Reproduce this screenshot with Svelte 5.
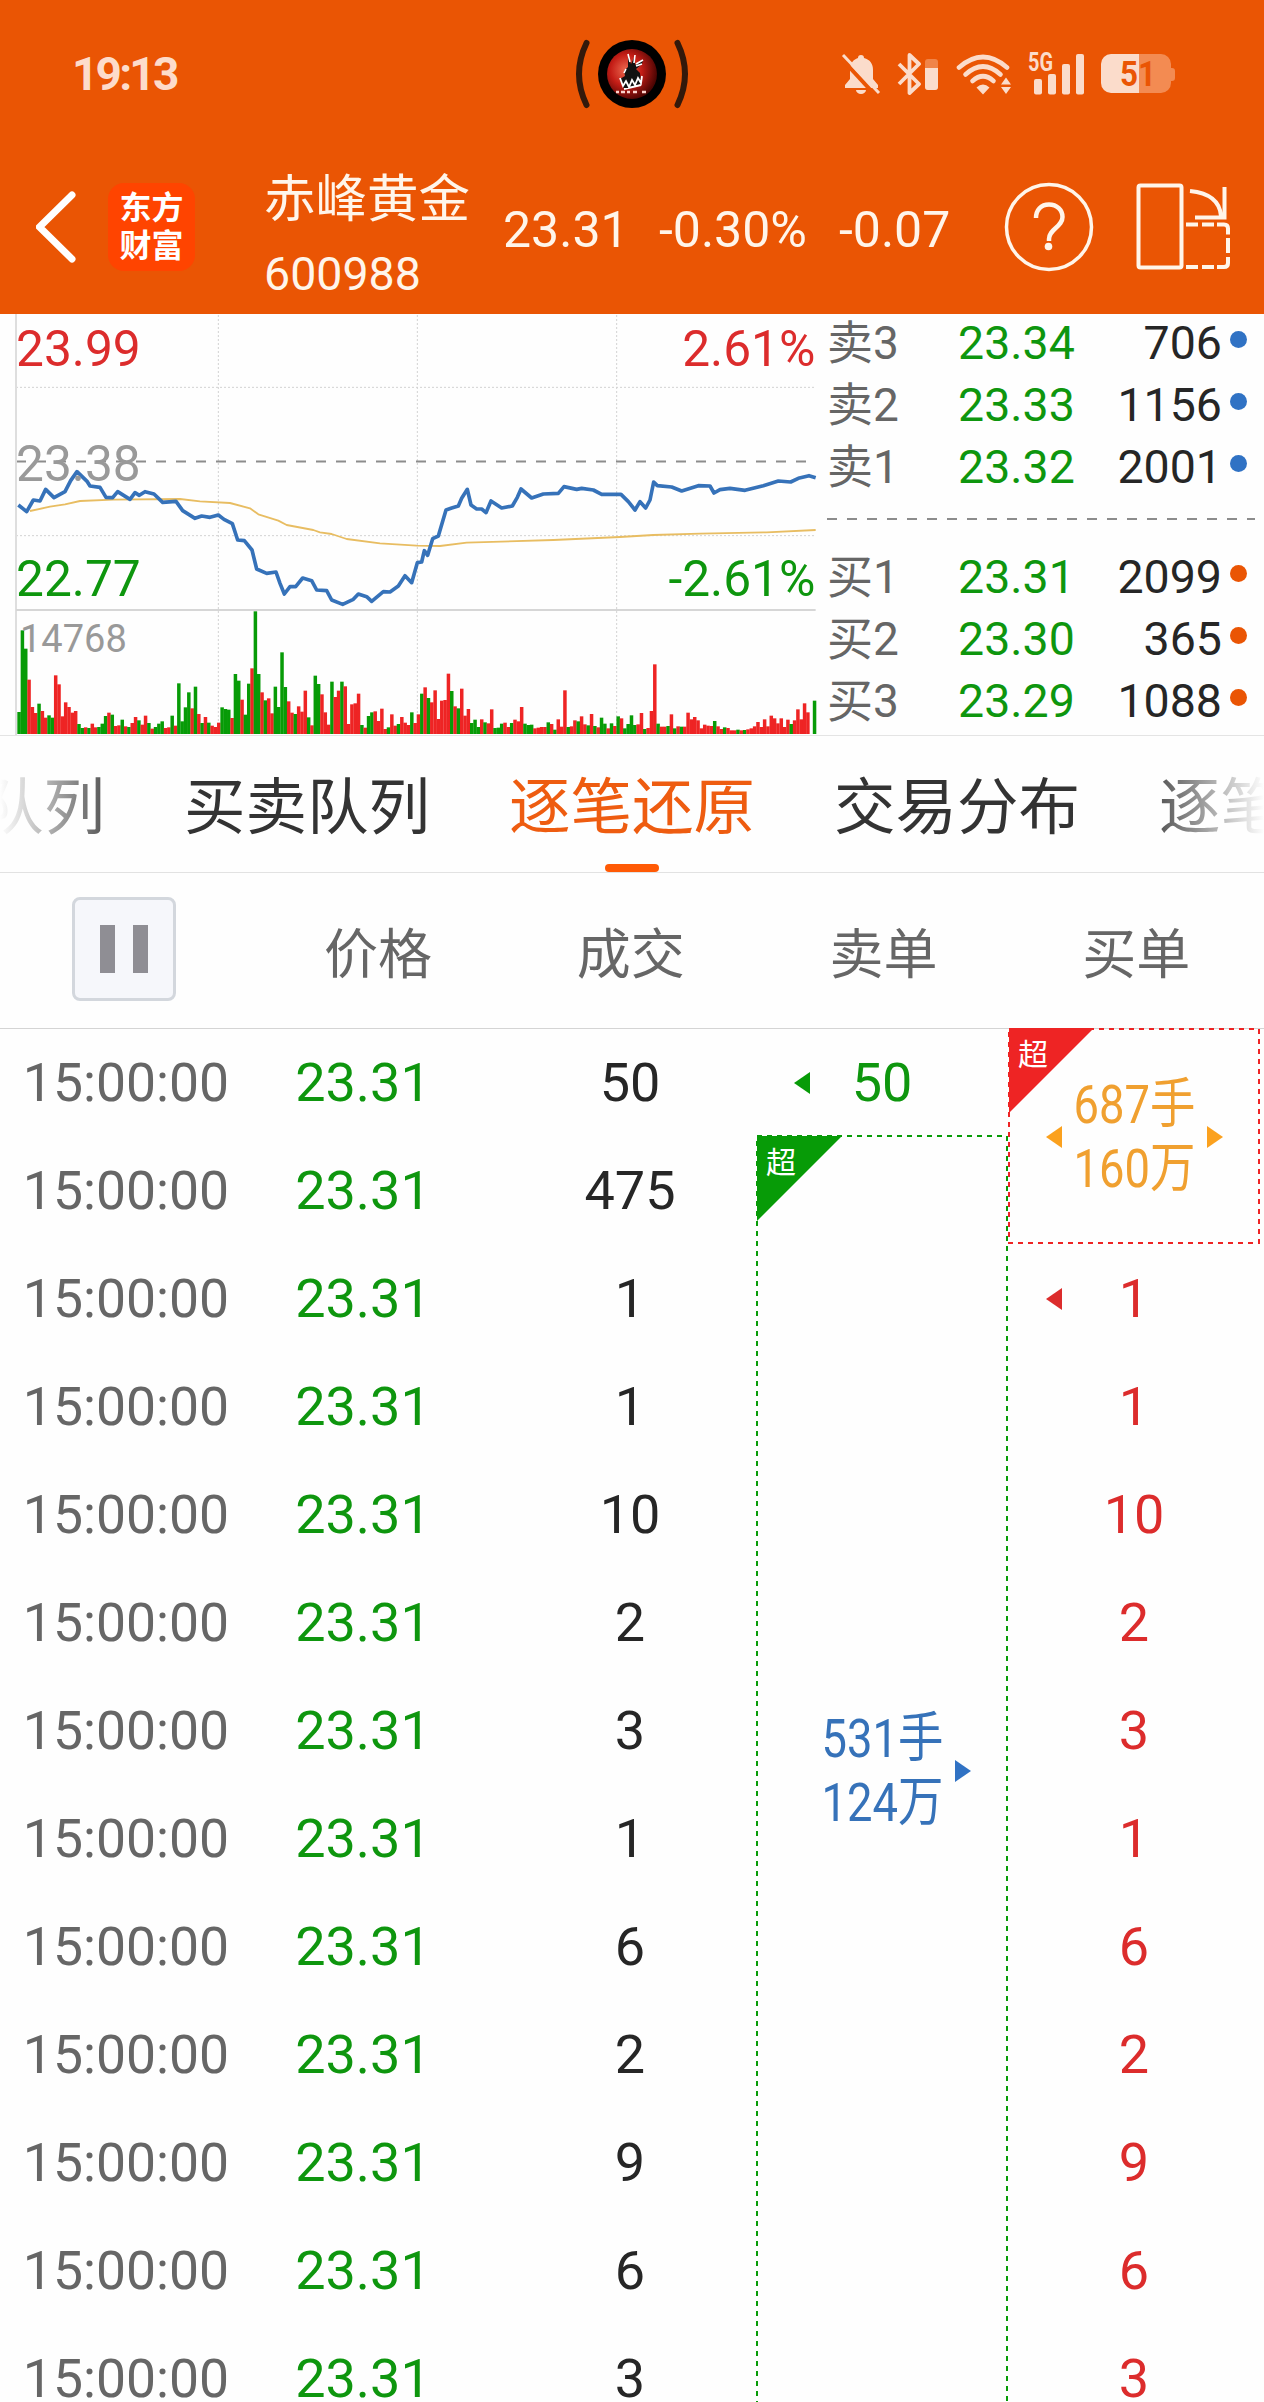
<script lang="ts">
	interface Level {
		label: string;
		price: string;
		volume: number;
	}

	interface Deal {
		time: string;
		price: string;
		volume: number;
	}

	const stock = { name: '赤峰黄金', code: '600988', price: '23.31', percent: '-0.30%', change: '-0.07' };

	const asks: Level[] = [
		{ label: '卖3', price: '23.34', volume: 706 },
		{ label: '卖2', price: '23.33', volume: 1156 },
		{ label: '卖1', price: '23.32', volume: 2001 }
	];

	const bids: Level[] = [
		{ label: '买1', price: '23.31', volume: 2099 },
		{ label: '买2', price: '23.30', volume: 365 },
		{ label: '买3', price: '23.29', volume: 1088 }
	];

	const tabs = ['买卖队列', '买卖队列', '逐笔还原', '交易分布', '逐笔委托'];
	let activeTab = $state(2);

	const columns = ['价格', '成交', '卖单', '买单'];

	const deals: Deal[] = [50, 475, 1, 1, 10, 2, 3, 1, 6, 2, 9, 6, 3].map((volume) => ({
		time: '15:00:00',
		price: '23.31',
		volume
	}));

	// the first two deals belong to one merged buy order
	const buys = deals.slice(2);

	// minute volumes: positive = up (red), negative = down (green)
	const volumes = [
		-66, -311, -256, 163, 81, 63, -91, 69, 49, -56, -49, 176, 149, 53, 95, 81, 64, 69, -30, -18,
		20, -18, 31, 20, -21, -31, -54, 64, -58, 24, 26, -43, 23, -21, 33, 51, -41, 28, 55, -33,
		16, -21, -31, -38, 18, 20, -55, 25, -152, -38, -80, -125, 77, -142, 60, -33, 51, -34, 25, 21,
		34, -80, -75, -73, 48, -180, -160, 103, -58, -151, 197, -368, -180, 125, -101, 107, 62, -142, -81, -245,
		-141, 98, 64, -60, 83, 67, 130, -50, 26, -175, -150, 119, 65, 28, -157, 111, 130, -157, 143, 30,
		89, 92, 121, -27, 19, -54, -65, 68, 39, 76, 15, -20, 59, 25, -30, 51, 34, 27, -65, 33,
		59, -121, 140, -108, 95, 131, 45, 100, 102, 181, -129, 83, -77, 136, 55, 75, -33, -43, -21, 44,
		-35, 32, 74, -18, -19, -31, 34, 21, -33, 43, 38, 81, -31, -27, -28, 17, 19, 21, 21, -35,
		30, -13, 44, 22, 131, -21, 23, 41, -38, 53, 29, -26, 60, -24, 20, -49, -31, 17, -32, 24,
		-53, 47, -17, -30, -56, -27, 29, 63, -15, 18, 69, 209, -31, 22, 22, -24, 59, -17, 23, -22,
		22, 64, 44, 51, 41, 17, 28, 25, 24, -39, 23, 15, -20, 18, 11, 11, -13, 11, -12, 14,
		17, 23, 36, 21, 44, 23, 55, 47, 32, 47, 21, 43, -30, 41, 74, 44, 92, 65, 0, -100
	];

	const priceLine =
		'55,585 80,605 100,570 120,573 137,538 162,563 195,545 212,512 231,485 262,515 270,528 300,532 318,562 338,563 353,545 390,568 405,548 418,556 435,545 462,552 488,577 528,574 548,602 585,625 605,618 630,622 655,615 672,628 697,641 713,690 733,692 756,720 770,777 800,790 828,786 840,820 853,852 870,830 887,830 908,804 935,812 950,840 980,842 995,870 1028,883 1060,868 1075,852 1100,860 1115,874 1150,845 1170,846 1195,828 1215,797 1235,818 1252,758 1265,756 1273,722 1283,736 1298,686 1315,678 1338,600 1355,594 1375,588 1385,565 1402,538 1413,585 1430,597 1445,597 1458,608 1473,573 1505,594 1537,588 1552,562 1563,537 1595,564 1630,552 1675,550 1692,530 1730,538 1745,535 1780,540 1805,553 1863,553 1885,575 1905,600 1920,575 1937,594 1950,570 1961,516 1972,527 2015,531 2045,543 2095,527 2130,528 2142,549 2160,539 2190,535 2235,541 2290,527 2335,513 2372,516 2395,505 2427,497 2447,503';

	const averageLine =
		'90,603 150,590 195,583 240,573 340,569 540,567 600,574 690,579 750,595 775,613 835,632 860,645 940,660 960,667 995,672 1040,687 1140,700 1250,707 1320,708 1400,698 1660,690 1860,681 1960,675 2100,671 2300,667 2447,660';
</script>

{#snippet marker(direction: 'left' | 'right')}
	<svg class="marker" viewBox="0 0 16 22">
		<path d={direction === 'left' ? 'M16 0V22L0 11Z' : 'M0 0V22L16 11Z'} />
	</svg>
{/snippet}

{#snippet levels(list: Level[], side: string)}
	{#each list as level}
		<div class="level">
			<span class="level-label">{level.label}</span>
			<span class="level-price">{level.price}</span>
			<span class="level-volume">{level.volume}</span>
			<i class="dot {side}"></i>
		</div>
	{/each}
{/snippet}

<div class="screen">
	<header>
		<div class="status">
			<span class="clock">19:13</span>

			<svg class="island" width="116" height="72" viewBox="0 0 116 72">
				<defs>
					<radialGradient id="disc" cx="38%" cy="42%" r="62%">
						<stop offset="0" stop-color="#ec6a50" />
						<stop offset="0.5" stop-color="#c41d16" />
						<stop offset="1" stop-color="#4d0503" />
					</radialGradient>
				</defs>
				<path d="M12.500 5Q-2.500 36 12.500 67M103.500 5Q118.500 36 103.500 67" fill="none" stroke="#33190b" stroke-width="6" stroke-linecap="round" />
				<circle cx="58" cy="36" r="34" fill="#000" />
				<circle cx="58" cy="36" r="25" fill="url(#disc)" />
				<path d="M54 17l3 9 4-8v9l8-5-1 4-6 5 4 4 1 11-17 5-4-10 5-3-1-5 4-4z" fill="#111" />
				<path d="M54 16l2 8M61 17l-1 8M69 22l-7 4M68 26l-6 2M52 31l-2 4" fill="none" stroke="#fff" stroke-width="1.600" />
				<path d="M46 40l3 8 3-5 3 6 3-7 3 5 3-7 3 5 1-7M50 51l17-4" fill="none" stroke="#fff" stroke-width="1.800" />
				<path d="M42 54h3m2 0h4m2 0h3m3 0h4m5 0h4" stroke="#fcd3cb" stroke-width="2.400" />
			</svg>

			<div class="indicators">
				<svg class="bell" width="40" height="42" viewBox="0 0 40 42">
					<path d="M20 2a3 3 0 0 1 3 3c6 1.500 9 6 9 12v9l5 6v3H4v-3l5-6v-9c0-6 3-10.500 8-12a3 3 0 0 1 3-3zM15 37h10a5 4 0 0 1-10 0z" />
					<path d="M0 5L35 43" stroke="#ea5504" stroke-width="4" />
					<path d="M2 2L38 40" stroke="#fbdccb" stroke-width="3" />
				</svg>
				<svg class="bluetooth" width="42" height="42" viewBox="0 0 42 42">
					<path d="M2 11L22 31L12.500 40V2L22 11L2 31" fill="none" stroke="#fbdccb" stroke-width="3.800" stroke-linejoin="round" />
					<rect x="28" y="6" width="13" height="31" rx="3" opacity="0.35" />
					<path d="M28 15h13v19a3 3 0 0 1-3 3h-7a3 3 0 0 1-3-3z" />
				</svg>
				<svg class="wifi" width="56" height="42" viewBox="0 0 56 42">
					<g fill="none" stroke="#fbdccb" stroke-width="4.600" stroke-linecap="round">
						<path d="M3 14.500Q27 -6.500 51 14.500" />
						<path d="M9.500 21.500Q27 5.500 44.500 21.500" />
						<path d="M16.500 28Q27 18.500 37.500 28" />
					</g>
					<path d="M20.500 34.500q6.500-6 13 0l-6.500 7zM50 24.500l5 7h-10zM50 41l5-7h-10z" />
				</svg>
				<svg class="signal" width="58" height="50" viewBox="0 -4 58 50">
					<text x="0" y="18" font-size="25.500" textLength="25" lengthAdjust="spacingAndGlyphs">5G</text>
					<rect x="6" y="26" width="8" height="15.500" rx="2" />
					<rect x="20" y="21" width="8" height="20.500" rx="2" />
					<rect x="34" y="11" width="8" height="30.500" rx="2" />
					<rect x="48" y="1" width="8" height="40.500" rx="2" />
				</svg>
				<svg class="battery" width="74" height="40" viewBox="0 0 74 40">
					<path d="M37 0h23a10 10 0 0 1 10 10v4h1a3 3 0 0 1 3 3v7a3 3 0 0 1-3 3h-1v2a10 10 0 0 1-10 10H37z" fill="#f38b52" />
					<path d="M38 0H10A10 10 0 0 0 0 10v19a10 10 0 0 0 10 10h28z" />
					<text class="charge" x="19" y="32" font-size="35" textLength="36" lengthAdjust="spacingAndGlyphs">51</text>
				</svg>
			</div>
		</div>

		<div class="quote">
			<svg width="42" height="74" viewBox="0 0 42 74">
				<path d="M36 5L3.500 37L36 69" fill="none" stroke="#fff" stroke-width="7" stroke-linecap="round" stroke-linejoin="miter" />
			</svg>
			<div class="brand"><span>东方</span><span>财富</span></div>
			<div class="identity">
				<span class="name">{stock.name}</span>
				<span class="code">{stock.code}</span>
			</div>
			<span class="figure">{stock.price}</span>
			<span class="figure">{stock.percent}</span>
			<span class="figure">{stock.change}</span>
			<svg width="90" height="90" viewBox="0 0 90 90">
				<circle cx="45" cy="45" r="42.500" fill="none" stroke="#fff5ea" stroke-width="3.500" />
				<path d="M32 36c0-8 5-13.500 13-13.500S58.500 28 58.500 35c0 10-13.500 12-13.500 22v2" fill="none" stroke="#fff5ea" stroke-width="4.500" />
				<circle cx="44.500" cy="64.500" r="3.800" fill="#fff5ea" />
			</svg>
			<svg width="96" height="88" viewBox="0 0 96 88">
				<g fill="none" stroke="#fff5ea" stroke-width="4">
					<rect x="2.500" y="2.500" width="43" height="82" rx="2" />
					<path d="M54 8C74 10 84 19 85 33M88.500 4V34.500H59" />
					<path d="M50 41.500h12M66 41.500h12M81 41.500h7q4 0 4 4v6M92 55v15M92 74v6q0 4-4 4h-7M78 84H66M62 84H50" />
				</g>
			</svg>
		</div>
	</header>

	<section class="market">
		<!-- drawn at three units per pixel -->
		<svg class="chart" width="817" height="421" viewBox="0 12 2451 1263">
			<g class="grid">
				<path d="M655 15V1272M1252 15V1272M1850 15V1272" />
				<path d="M48 232H2447M48 677H2447" />
			</g>
			<path d="M48 454.500H2427" stroke="#8c8c8c" stroke-width="6" stroke-dasharray="30 30" />
			<path d="M48 12V1275" stroke="#dedede" stroke-width="6" />
			<path d="M48 900H2447" stroke="#d6d6d6" stroke-width="6" />

			{#each volumes as volume, i}
				<rect
					x={52 + i * 9.985}
					y={1272 - Math.abs(volume)}
					width="10.500"
					height={Math.abs(volume)}
					fill={volume > 0 ? '#ee2424' : '#079b07'}
				/>
			{/each}

			<polyline points={averageLine} stroke="#e8bd62" stroke-width="5.500" />
			<polyline points={priceLine} stroke="#3672b9" stroke-width="11" />

			<text class="up" x="48" y="167">23.99</text>
			<text class="flat" x="48" y="512">23.38</text>
			<text class="down" x="48" y="857">22.77</text>
			<text class="up" x="2446" y="167" text-anchor="end">2.61%</text>
			<text class="down" x="2446" y="857" text-anchor="end">-2.61%</text>
			<text class="flat peak" x="60" y="1025">14768</text>
		</svg>

		<div class="book">
			{@render levels(asks, 'ask')}
			<svg class="divider" width="430" height="48">
				<path d="M0 19H428" stroke="#8c8c8c" stroke-width="2" stroke-dasharray="10 10" />
			</svg>
			{@render levels(bids, 'bid')}
		</div>
	</section>

	<nav>
		{#each tabs as tab, i}
			<button class:active={i === activeTab} onclick={() => (activeTab = i)}>{tab}</button>
		{/each}
	</nav>

	<div class="head">
		<div class="pause-cell">
			<button class="pause" aria-label="暂停"><i></i><i></i></button>
		</div>
		{#each columns as column}
			<span>{column}</span>
		{/each}
	</div>

	<main>
		<div class="deals">
			{#each deals as deal}
				<div class="deal">
					<span class="time">{deal.time}</span>
					<span class="price">{deal.price}</span>
					<span class="volume">{deal.volume}</span>
				</div>
			{/each}
		</div>

		<div class="orders sell">
			<div class="order">
				{@render marker('left')}
				<span>50</span>
			</div>
			<div class="block sell-block">
				<svg class="outline"><rect x="1" y="1" width="250" height="1300" /></svg>
				<span class="badge">超</span>
				<i></i>
				<p><span>531手</span><span>124万</span></p>
				{@render marker('right')}
			</div>
		</div>

		<div class="orders buy">
			<div class="block buy-block">
				<svg class="outline"><rect x="1" y="1" width="250" height="214" /></svg>
				<span class="badge">超</span>
				{@render marker('left')}
				<p><span>687手</span><span>160万</span></p>
				{@render marker('right')}
			</div>
			{#each buys as buy, i}
				<div class="order">
					{#if i === 0}
						{@render marker('left')}
					{:else}
						<i></i>
					{/if}
					<span>{buy.volume}</span>
				</div>
			{/each}
		</div>
	</main>
</div>

<style>
	:global(body) {
		background: #fefefe;
	}

	.screen {
		width: 1264px;
		height: 2402px;
		overflow: hidden;
		background: #fefefe;
		color: #262626;
		font-family: Roboto, 'Noto Sans CJK SC', sans-serif;
	}

	svg {
		display: block;
	}

	button {
		font: inherit;
		border: 0;
		padding: 0;
		background: none;
	}

	header {
		height: 314px;
		background: #ea5504;
		color: #fff5ea;
	}

	/* status bar */
	.status {
		display: grid;
		grid-template-columns: 502px 116px 1fr;
		align-items: center;
		height: 148px;
		padding-left: 72px;
	}

	.clock {
		font-size: 46px;
		font-weight: 700;
		letter-spacing: -2.8px;
		color: #fddccb;
	}

	.indicators {
		display: flex;
		align-items: center;
		padding-left: 151px;
		fill: #fbdccb;
	}

	.indicators text {
		font-weight: 700;
	}

	.bluetooth {
		margin-left: 16px;
	}

	.wifi {
		margin-left: 17px;
	}

	.signal {
		margin-left: 16px;
	}

	.battery {
		margin-left: 15px;
	}

	.charge {
		fill: #ea5504;
	}

	/* quote header */
	.quote {
		display: grid;
		grid-template-columns: 72px 156px 239px 156px 180px 165px 1fr;
		grid-template-rows: 158px;
		align-items: center;
		padding-left: 36px;
	}

	.brand {
		display: flex;
		flex-direction: column;
		align-items: center;
		justify-content: center;
		width: 87px;
		height: 88px;
		border-radius: 16px;
		background: #ff4400;
		color: #fff;
		font-size: 32px;
		font-weight: 700;
		line-height: 38px;
	}

	.quote {
		grid-template-columns: 72px 156px 239px 156px 180px 165px 132px 96px;
	}

	.identity {
		display: flex;
		flex-direction: column;
		padding-top: 18px;
		white-space: nowrap;
	}

	.name {
		font-size: 51.5px;
		line-height: 76px;
	}

	.code {
		font-size: 46.5px;
		line-height: 72px;
	}

	.figure {
		padding-top: 6px;
		font-size: 50px;
	}

	/* chart and order book */
	.market {
		display: flex;
		height: 421px;
		border-bottom: 1px solid #e4e4e4;
	}

	.chart {
		flex: none;
	}

	.grid {
		stroke: #d2d2d2;
		stroke-width: 3;
		stroke-dasharray: 6 6;
	}

	polyline {
		fill: none;
		stroke-linejoin: round;
	}

	.chart text {
		font-size: 149px;
	}

	.chart .peak {
		font-size: 114px;
	}

	.up {
		fill: #dc2c2c;
	}

	.down {
		fill: #0e960e;
	}

	.flat {
		fill: #999;
	}

	.book {
		width: 430px;
		padding-left: 10px;
	}

	.level {
		display: grid;
		grid-template-columns: 131px 140px 124px 17px;
		height: 62px;
		font-size: 46.5px;
		line-height: 58px;
	}

	.level-label {
		color: #666;
		font-size: 46px;
	}

	.level-price {
		color: #0e960e;
	}

	.level-volume {
		text-align: right;
	}

	.dot {
		width: 17px;
		height: 17px;
		margin: 17px 0 0 8px;
		border-radius: 50%;
	}

	.ask {
		background: #3072c4;
	}

	.bid {
		background: #ea5504;
	}

	/* tabs */
	nav {
		position: relative;
		display: flex;
		justify-content: center;
		gap: 79px;
		height: 136px;
		overflow: hidden;
		border-bottom: 1px solid #e2e2e2;
	}

	nav::after {
		content: '';
		position: absolute;
		inset: 0;
		pointer-events: none;
		background: linear-gradient(90deg, #fefefe, #fefefe00 128px, #fefefe00 1136px, #fefefe);
	}

	nav button {
		flex: none;
		display: flex;
		flex-direction: column;
		align-items: center;
		justify-content: flex-start;
		height: 136px;
		color: #333;
		font-size: 61.5px;
		line-height: 145px;
	}

	nav .active {
		color: #ee5c10;
	}

	nav .active::after {
		content: '';
		width: 54px;
		height: 8px;
		margin-top: -17px;
		border-radius: 4px;
		background: #ff5a05;
	}

	/* column captions */
	.head {
		display: grid;
		grid-template-columns: 251.500px repeat(4, 252.800px);
		height: 155px;
		border-bottom: 1px solid #d4d4d4;
		color: #666;
		font-size: 54px;
		line-height: 165px;
		text-align: center;
	}

	.pause-cell {
		display: flex;
		justify-content: center;
		padding: 24px 3px 0 0;
	}

	.pause {
		display: flex;
		align-items: center;
		justify-content: center;
		gap: 18px;
		width: 104px;
		height: 104px;
		box-sizing: border-box;
		border: 3px solid #d3d7dd;
		border-radius: 8px;
		background: #f6f7fb;
	}

	.pause i {
		width: 15px;
		height: 48px;
		background: #8f8e94;
	}

	/* deals with their sell and buy orders */
	main {
		display: flex;
		font-size: 54px;
		line-height: 108px;
		text-align: center;
	}

	.deals {
		width: 756px;
	}

	.deal {
		display: grid;
		grid-template-columns: repeat(3, 252px);
		height: 108px;
	}

	.time {
		color: #666;
		font-size: 53.5px;
	}

	.price {
		padding-right: 30px;
		color: #0e960e;
	}

	.orders {
		width: 252px;
	}

	.order,
	.block {
		display: grid;
		grid-template-columns: 16px 1fr 16px;
		align-items: center;
		height: 108px;
		padding: 0 38px;
	}

	.block {
		position: relative;
		box-sizing: border-box;
	}

	.sell {
		color: #0e960e;
		fill: #079b07;
	}

	.buy {
		color: #dc2c2c;
		fill: #dc2c2c;
	}

	.sell-block {
		height: 1296px;
		padding-bottom: 28px;
		color: #3672b9;
		fill: #3072c4;
		--edge: #079b07;
	}

	.buy-block {
		height: 216px;
		padding-bottom: 1px;
		color: #f0a030;
		fill: #fba11e;
		--edge: #ee2424;
	}

	.outline {
		position: absolute;
		inset: -1px 0 0;
		width: 100%;
		height: 100%;
		fill: none;
		stroke: var(--edge);
		stroke-width: 2;
		stroke-dasharray: 5 5;
	}

	.sell-block .outline {
		top: -2px;
		height: 1298px;
	}

	.badge {
		position: absolute;
		top: -1px;
		left: 1px;
		width: 76px;
		height: 85px;
		padding-left: 9px;
		clip-path: polygon(0 0, 100% 0, 0 100%);
		background: var(--edge);
		color: #fff;
		font-size: 30px;
		line-height: 54px;
		text-align: left;
	}

	.marker {
		width: 16px;
		height: 22px;
	}

	/* order totals are set in narrowed figures */
	p {
		display: flex;
		flex-direction: column;
		align-items: center;
		margin: 0;
		line-height: 64px;
		white-space: nowrap;
		transform: scaleX(0.84);
	}
</style>
